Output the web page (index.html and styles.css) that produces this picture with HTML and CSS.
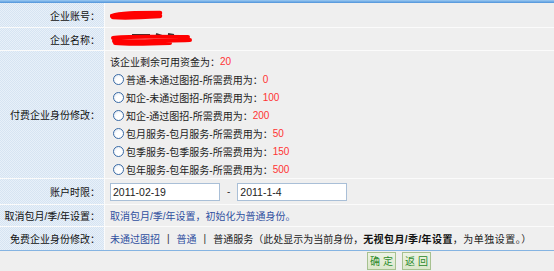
FILE: index.html
```html
<!DOCTYPE html>
<html lang="zh-CN">
<head>
<meta charset="utf-8">
<title>企业身份修改</title>
<link rel="stylesheet" href="styles.css">
</head>
<body>
<div class="form">
  <div class="topbar"></div>
  <div class="grid">
    <div class="label">企业账号：</div>
    <div class="value">
      <svg class="redact" width="56" height="10" viewBox="0 0 56 10"><path d="M2 6 C10 3, 25 3, 50 3 M3 7 C15 8, 35 7, 50 6" stroke="#f00" stroke-width="4.5" fill="none" stroke-linecap="round"/></svg>
    </div>

    <div class="label">企业名称：</div>
    <div class="value">
      <svg class="redact" width="84" height="16" viewBox="0 0 84 16"><path d="M22 4 L40 4 M46 3 L52 5 M58 3 L64 4" stroke="#333" stroke-width="2" fill="none"/><path d="M3 7 C15 5, 35 6, 78 6 M4 10 C20 11, 40 10, 80 9 M5 12 C15 13, 30 13, 60 12" stroke="#f00" stroke-width="4" fill="none" stroke-linecap="round"/></svg>
    </div>

    <div class="label">付费企业身份修改：</div>
    <div class="value options">
      <div class="line">该企业剩余可用资金为：<span class="num">20</span></div>
      <label class="line"><input type="radio" name="t">普通-未通过图招-所需费用为：<span class="num">0</span></label>
      <label class="line"><input type="radio" name="t">知企-未通过图招-所需费用为：<span class="num">100</span></label>
      <label class="line"><input type="radio" name="t">知企-通过图招-所需费用为：<span class="num">200</span></label>
      <label class="line"><input type="radio" name="t">包月服务-包月服务-所需费用为：<span class="num">50</span></label>
      <label class="line"><input type="radio" name="t">包季服务-包季服务-所需费用为：<span class="num">150</span></label>
      <label class="line"><input type="radio" name="t">包年服务-包年服务-所需费用为：<span class="num">500</span></label>
    </div>

    <div class="label">账户时限：</div>
    <div class="value">
      <input class="date" type="text" value="2011-02-19">
      <span class="dash">-</span>
      <input class="date" type="text" value="2011-1-4">
    </div>

    <div class="label">取消包月/季/年设置：</div>
    <div class="value"><a class="link" href="#">取消包月/季/年设置，初始化为普通身份。</a></div>

    <div class="label">免费企业身份修改：</div>
    <div class="value">
      <a class="link" href="#">未通过图招</a><span class="sep">|</span><a class="link" href="#">普通</a><span class="sep">|</span>普通服务（此处显示为当前身份，<b>无视包月/季/年设置</b><span class="tail">，为单独设置。）</span>
    </div>
  </div>
  <div class="actions">
    <button class="btn" type="button"><span>确</span><span>定</span></button>
    <button class="btn" type="button"><span>返</span><span>回</span></button>
  </div>
</div>
</body>
</html>
```
FILE: styles.css
```css
html, body {
  margin: 0;
  padding: 0;
  background: #efefef;
}
body {
  font-family: "Liberation Sans", "Noto Sans CJK SC", sans-serif;
  font-size: 10px;
  color: #1c1c1c;
}
.form {
  width: 554px;
}
.topbar {
  height: 3px;
  background: linear-gradient(#9ccaf2, #4f93da);
}
.grid {
  display: grid;
  grid-template-columns: 104px 1fr;
  grid-template-rows: 24px 22px 127px 25px 21px 23px;
  gap: 1px;
  background: #fbfbfb;
  border-bottom: 1px solid #85b4e2;
}
.label {
  display: flex;
  align-items: center;
  justify-content: flex-end;
  padding-right: 4px;
  color: #111;
  white-space: nowrap;
  background: repeating-conic-gradient(#d6e4f2 0 25%, #e8f0f9 0 50%) 0 0 / 2px 2px;
}
.value {
  display: flex;
  align-items: center;
  padding-left: 5px;
  background: #efefef;
  white-space: nowrap;
}
.redact {
  display: block;
}
.options {
  flex-direction: column;
  align-items: flex-start;
  justify-content: flex-start;
  padding-top: 1px;
}
.line {
  display: flex;
  align-items: center;
  height: 18px;
}
.num {
  color: #f33;
  font-family: "Liberation Sans", sans-serif;
}
input[type="radio"] {
  appearance: none;
  -webkit-appearance: none;
  width: 11px;
  height: 11px;
  margin: 0 2px 0 3px;
  border: 1px solid #3a6ba6;
  border-radius: 50%;
  background: radial-gradient(circle at 60% 65%, #fff 0, #fff 40%, #d8e2ee 100%);
  box-sizing: border-box;
}
.date {
  width: 110px;
  height: 18px;
  box-sizing: border-box;
  margin: 0;
  padding: 0 2px;
  border: 1px solid #a9bfd7;
  background: #fff;
  font-family: "Liberation Sans", sans-serif;
  font-size: 10.5px;
  color: #222;
}
.dash {
  margin: 0 7px 0 7px;
  color: #333;
}
.link {
  color: #2f4f9f;
  text-decoration: none;
}
.sep {
  margin: 0 7px;
  color: #333;
}
b {
  color: #111;
  letter-spacing: 0.4px;
}
.tail {
  letter-spacing: 0.5px;
}
.actions {
  display: flex;
  gap: 6px;
  padding: 1px 0 0 367px;
}
.btn {
  display: flex;
  align-items: center;
  justify-content: center;
  gap: 3px;
  width: 29px;
  height: 18px;
  padding: 0;
  margin: 0;
  border: 1px solid #a6c190;
  background: linear-gradient(#edf3e4, #dbe7cc);
  color: #2a8a2a;
  font-family: "Noto Sans CJK SC", sans-serif;
  font-size: 10px;
  line-height: 1;
  white-space: nowrap;
}
```
